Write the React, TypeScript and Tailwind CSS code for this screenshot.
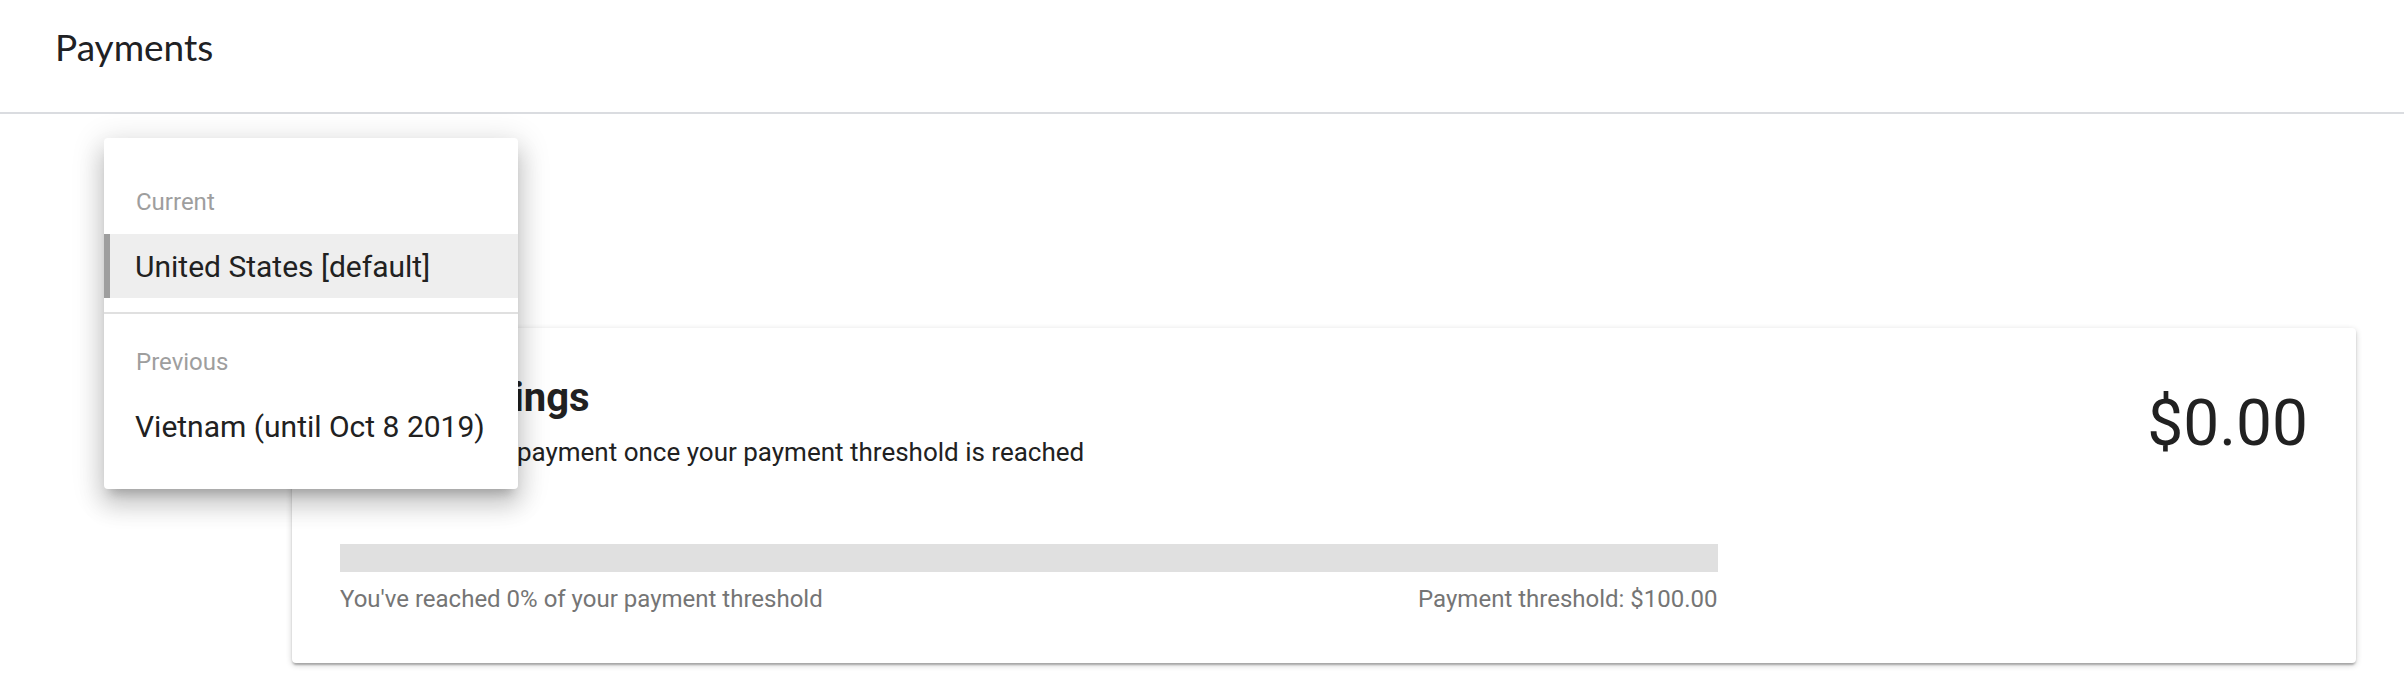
const sans = "font-['Roboto','Liberation_Sans',sans-serif]";

function CountryMenu() {
  return (
    <div className="absolute left-[104px] top-[138px] w-[414px] rounded-[4px] bg-white shadow-[0_10px_10px_-6px_rgba(0,0,0,0.2),0_16px_24px_2px_rgba(0,0,0,0.14),0_6px_30px_5px_rgba(0,0,0,0.12)]">
      {/* Current */}
      <div className="pt-[48px] pb-[14px]">
        <div className="pl-[32px] text-[24px] leading-[32px] text-[#9e9e9e]">Current</div>
        <div className="mt-[16px] flex h-[64px] items-center border-l-[6px] border-[#9e9e9e] bg-[#eeeeee] pl-[25px] text-[30px] text-[#212121]">
          United States [default]
        </div>
      </div>

      {/* Previous */}
      <div className="border-t-2 border-[#e0e0e0] pt-[32px] pb-[31px]">
        <div className="pl-[32px] text-[24px] leading-[32px] text-[#9e9e9e]">Previous</div>
        <div className="mt-[16px] flex h-[64px] items-center pl-[31px] text-[30px] text-[#212121]">
          Vietnam (until Oct 8 2019)
        </div>
      </div>
    </div>
  );
}

export default function App() {
  return (
    <div className={`relative min-h-[682px] bg-white ${sans}`}>
      {/* Header */}
      <header className="h-[114px] border-b-2 border-[#dadce0] pl-[55px] pt-[28px]">
        <h1 className="font-['Lato',sans-serif] text-[37px] leading-none text-[#202124]">Payments</h1>
      </header>

      {/* Earnings card */}
      <main className="pl-[292px] pr-[48px] pt-[214px]">
        <div className="rounded-[4px] bg-white px-[48px] pt-[48px] pb-[48px] shadow-[0_2px_2px_rgba(0,0,0,0.14),0_4px_2px_-2px_rgba(0,0,0,0.12),0_2px_6px_rgba(0,0,0,0.2)]">
          <div className="flex justify-between">
            <div>
              <h2 className="text-[40px] font-bold leading-[44px] text-[#212121]">Your earnings</h2>
              <p className="mt-[16px] text-[26px] leading-[32px] text-[#212121]">
                You'll receive a payment once your payment threshold is reached
              </p>
            </div>
            <div className="mt-[16px] text-[64px] leading-none text-[#212121]">$0.00</div>
          </div>

          <div className="mt-[76px] h-[28px] w-[70%] bg-[#e0e0e0]" />
          <div className="mt-[11px] flex w-[70%] justify-between text-[24px] leading-[32px] text-[#757575]">
            <span>You've reached 0% of your payment threshold</span>
            <span>Payment threshold: $100.00</span>
          </div>
        </div>
      </main>

      <CountryMenu />
    </div>
  );
}
